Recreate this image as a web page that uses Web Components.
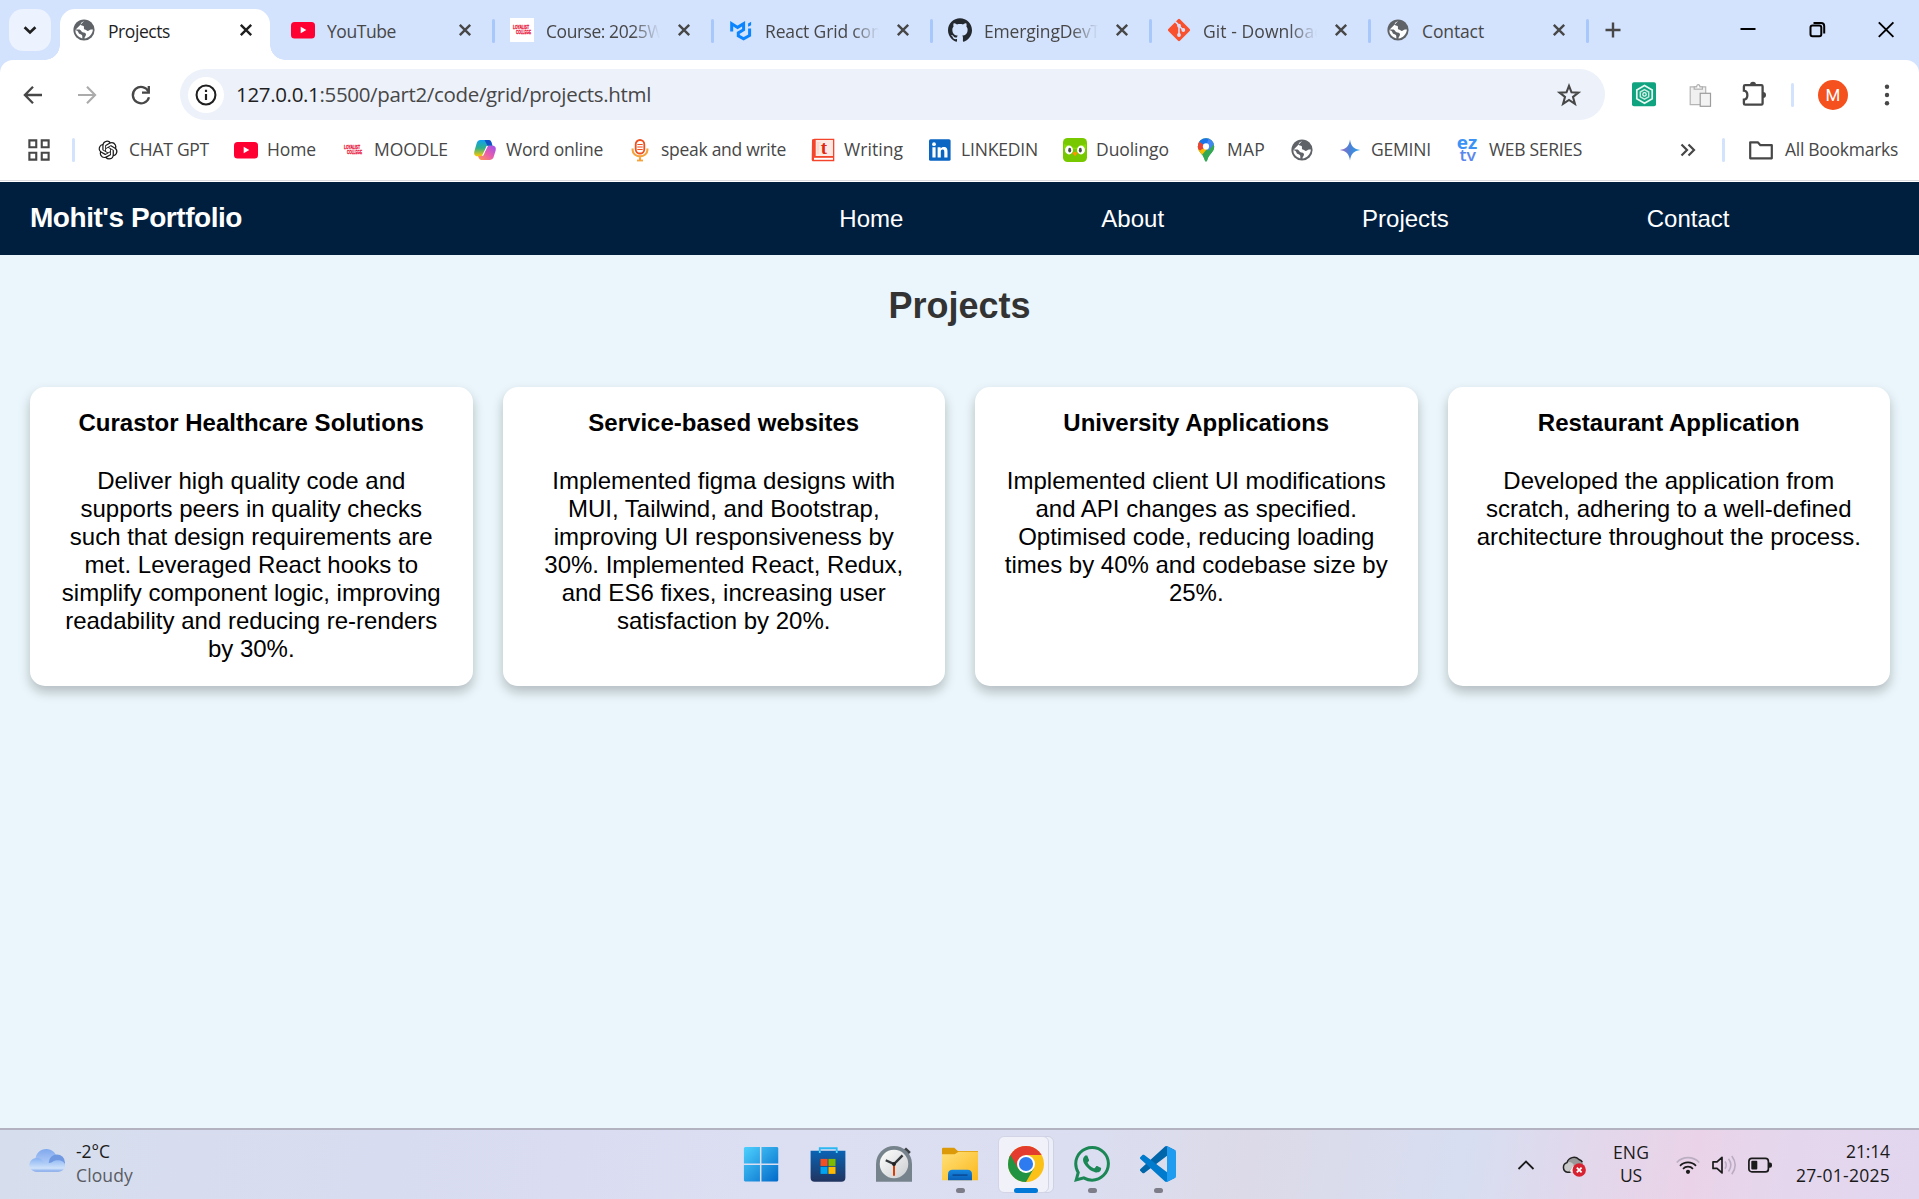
<!DOCTYPE html>
<html lang="en">
<head>
<meta charset="utf-8">
<title>Projects</title>
<style>
html,body{margin:0;height:100%;overflow:hidden;background:#eaf6fb}
</style>
</head>
<body>
<desktop-screen></desktop-screen>
<script>
const UI = '"Open Sans","Noto Sans",sans-serif';

class BaseEl extends HTMLElement {
  mount(css, html) {
    if (this.shadowRoot) return;
    this.attachShadow({mode:'open'}).innerHTML = `<style>*{box-sizing:border-box}${css}</style>${html}`;
  }
}

/* A single line of text spread over a given width by letter spacing. */
class FitText extends BaseEl {
  connectedCallback() {
    const w = +this.getAttribute('w');
    this.mount(`:host{display:block;white-space:nowrap;width:${w}px;flex:none}span{display:inline-block}`, `<span><slot></slot></span>`);
    const span = this.shadowRoot.querySelector('span');
    const natural = span.getBoundingClientRect().width;
    span.style.letterSpacing = ((w - natural) / this.textContent.length).toFixed(3) + 'px';
  }
}
customElements.define('fit-text', FitText);

const ICONS = {
  globe: `<circle cx="12" cy="12" r="10.6" fill="#5f6368"/><path d="M12.200 3.100c-1.900 1-3.200 1.600-3.500 2.900-.2 1 .9 1.600 2 1.700 1.400 .2 1.400 1.300 1.200 2.400-.1 1 .5 1.600 1.500 1.700 1.300 .1 1.300 1.300 2.300 1.300 1.200 0 2-1.600 3.300-1.600h1.900c-.3 4.600-4 8.600-8.400 9.100-.1-1.800 1.500-2.300 1.500-4 0-1.900-1.600-2.100-3-2.200-2-.2-1.900-2.800-4-2.800H3.200A9 9 0 0 0 10.300 20.500v-2.300c0-1.300-1.400-1.800-2.500-2.100-1.500-.4-1.200-2.500-2.600-3.300L3.200 12" fill="white"/>`,
  youtube: `<rect x="0" y="4" width="24" height="16.500" rx="3.500" fill="#ff0033"/><path d="M9.700 8.800v6.400l5.600-3.200z" fill="#fff"/>`,
  loyalistbox: `<rect width="24" height="24" fill="#fff"/><g font-family="Liberation Sans" font-weight="700" fill="#e8203f" stroke="#e8203f" stroke-width=".35"><text x="3" y="11.300" font-size="4.800" textLength="16" lengthAdjust="spacingAndGlyphs">LOYALIST</text><text x="6" y="15.700" font-size="4.800" textLength="15" lengthAdjust="spacingAndGlyphs">COLLEGE</text></g>`,
  loyalist: `<g font-family="Liberation Sans" font-weight="700" fill="#e8203f" stroke="#e8203f" stroke-width=".35"><text x="3" y="11.300" font-size="4.800" textLength="16" lengthAdjust="spacingAndGlyphs">LOYALIST</text><text x="6" y="15.700" font-size="4.800" textLength="15" lengthAdjust="spacingAndGlyphs">COLLEGE</text></g>`,
  mui: `<path d="M2.700 13.500V5.700l5.900 3.700 6-3.700v6l-5.300 3.200v3l5.300 3 6-3.400v-7" fill="none" stroke="#0a84ff" stroke-width="3"/><path d="M19.100 5.500l3-1.700v3.400l-3 1.600z" fill="#0a84ff"/>`,
  github: `<path fill="#24292f" d="M12 .297c-6.630 0-12 5.373-12 12 0 5.303 3.438 9.800 8.205 11.385.6.113.82-.258.82-.577 0-.285-.01-1.040-.015-2.040-3.338.724-4.042-1.610-4.042-1.610C4.422 18.070 3.633 17.700 3.633 17.700c-1.087-.744.084-.729.084-.729 1.205.084 1.838 1.236 1.838 1.236 1.070 1.835 2.809 1.305 3.495.998.108-.776.417-1.305.76-1.605-2.665-.3-5.466-1.332-5.466-5.930 0-1.310.465-2.380 1.235-3.220-.135-.303-.54-1.523.105-3.176 0 0 1.005-.322 3.300 1.230.96-.267 1.980-.399 3-.405 1.020.006 2.040.138 3 .405 2.280-1.552 3.285-1.230 3.285-1.230.645 1.653.24 2.873.12 3.176.765.84 1.230 1.910 1.230 3.220 0 4.610-2.805 5.625-5.475 5.920.42.36.81 1.096.81 2.220 0 1.606-.015 2.896-.015 3.286 0 .315.21.69.825.57C20.565 22.092 24 17.592 24 12.297c0-6.627-5.373-12-12-12"/>`,
  git: `<rect x="3.800" y="3.800" width="16.400" height="16.400" rx="1.300" transform="rotate(45 12 12)" fill="#f9502d"/><path d="M8.200 3.700l3.800 3.600v9.500M12.200 8l4 4" fill="none" stroke="#d3e2fd" stroke-width="1.600"/><circle cx="12" cy="7.700" r="1.900" fill="#d3e2fd"/><circle cx="12" cy="17" r="1.900" fill="#d3e2fd"/><circle cx="16.300" cy="12" r="1.900" fill="#d3e2fd"/>`,
  close: `<path d="M6.800 6.800l10.400 10.400M17.200 6.800L6.800 17.200" stroke="currentColor" stroke-width="2.400" fill="none"/>`,
  plus: `<path d="M12 4.500v15M4.500 12h15" stroke="#474747" stroke-width="2.400"/>`,
  chevdown: `<path d="M6.600 9.300l5.400 5.200 5.400-5.200" fill="none" stroke="#1f1f1f" stroke-width="2.700"/>`,
  back: `<path d="M21 12H4.500M12 3.800L3.900 12l8.100 8.200" fill="none" stroke="#474747" stroke-width="2.300"/>`,
  fwd: `<path d="M3 12h16.500M12 3.800l8.100 8.200-8.100 8.200" fill="none" stroke="#ababab" stroke-width="2.100"/>`,
  reload: `<path d="M19.500 8.600A8.200 8.200 0 1 0 20 14.200" fill="none" stroke="#474747" stroke-width="2.300"/><path d="M19.800 3v6.600H13" fill="none" stroke="#474747" stroke-width="2.300"/>`,
  info: `<circle cx="12" cy="12" r="8.700" fill="none" stroke="#1f1f1f" stroke-width="1.900"/><path d="M12 11v5.600M12 7.200v2" stroke="#1f1f1f" stroke-width="2"/>`,
  star: `<path d="M12 2.800l2.500 6.500 6.900.3-5.400 4.400 1.900 6.800L12 16.900l-5.900 3.900L8 14 2.600 9.600l6.900-.3z" fill="none" stroke="#474747" stroke-width="2.100"/>`,
  gptext: `<g transform="translate(0 -.7)"><rect width="24" height="24" rx="2" fill="#10a37f"/><path d="M12.500 3.300l7.700 4.400v8.800l-7.700 4.400-7.700-4.400V7.700z" fill="none" stroke="#e9f7f2" stroke-width="1.700"/><path d="M12.500 7.300l4.200 2.400v4.800l-4.200 2.400-4.200-2.400V9.700z" fill="none" stroke="#c6e9dd" stroke-width="1.500"/><circle cx="12.500" cy="12.100" r="1.700" fill="none" stroke="#e9f7f2" stroke-width="1.300"/></g>`,
  clip: `<g transform="translate(1.200 .3)"><path d="M2 3.500h15.500v17.800H2z" fill="#f0f0f0" stroke="#b5b5b5" stroke-width="1.200"/><path d="M6 5.800V3.500h2.500C8.500.5 11.500.5 11.700 3.500h2.500v2.300z" fill="#fff" stroke="#b0b0b0" stroke-width="1.200"/><rect x="12" y="10" width="10.300" height="13" fill="#f3f3f3" stroke="#9d9d9d" stroke-width="1.200"/></g>`,
  puzzle: `<path d="M3.200 2.200h16.200q1.200 0 1.200 1.200v17q0 1.300-1.300 1.300H3.200q-1.300 0-1.300-1.300v-3.800c4.600-.6 4.600-8.300 0-8.900V3.500q0-1.300 1.300-1.300z" fill="none" stroke="#474747" stroke-width="2.300"/><path d="M8 1.700a3 3 0 0 1 6 0zM21 9a3 3 0 0 1 0 6z" fill="#474747"/>`,
  dots: `<g fill="#474747"><circle cx="12" cy="3.700" r="2.200"/><circle cx="12" cy="12" r="2.200"/><circle cx="12" cy="20.200" r="2.200"/></g>`,
  apps: `<g fill="none" stroke="#474747" stroke-width="2.300"><path d="M1.500 1.500h7.500v7.500H1.500zM15 1.500h7.500v7.500H15zM1.500 15h7.500v7.500H1.500zM15 15h7.500v7.500H15z"/></g>`,
  openai: `<path transform="translate(2.600 2.600) scale(.79)" fill="#1c1c1c" d="M22.2819 9.8211a5.9847 5.9847 0 0 0-.5157-4.9108 6.0462 6.0462 0 0 0-6.5098-2.9A6.0651 6.0651 0 0 0 4.9807 4.1818a5.9847 5.9847 0 0 0-3.9977 2.9 6.0462 6.0462 0 0 0 .7427 7.0966 5.98 5.98 0 0 0 .511 4.9107 6.051 6.051 0 0 0 6.5146 2.9001A5.9847 5.9847 0 0 0 13.2599 24a6.0557 6.0557 0 0 0 5.7718-4.2058 5.9894 5.9894 0 0 0 3.9977-2.9001 6.0557 6.0557 0 0 0-.7475-7.0729zm-9.022 12.6081a4.4755 4.4755 0 0 1-2.8764-1.0408l.1419-.0804 4.7783-2.7582a.7948.7948 0 0 0 .3927-.6813v-6.7369l2.02 1.1686a.071.071 0 0 1 .038.052v5.5826a4.504 4.504 0 0 1-4.4945 4.4944zm-9.6607-4.1254a4.4708 4.4708 0 0 1-.5346-3.0137l.142.0852 4.783 2.7582a.7712.7712 0 0 0 .7806 0l5.8428-3.3685v2.3324a.0804.0804 0 0 1-.0332.0615L9.74 19.9502a4.4992 4.4992 0 0 1-6.1408-1.6464zM2.3408 7.8956a4.485 4.485 0 0 1 2.3655-1.9728V11.6a.7664.7664 0 0 0 .3879.6765l5.8144 3.3543-2.0201 1.1685a.0757.0757 0 0 1-.071 0l-4.8303-2.7865A4.504 4.504 0 0 1 2.3408 7.872zm16.5963 3.8558L13.1038 8.364 15.1192 7.2a.0757.0757 0 0 1 .071 0l4.8303 2.7913a4.4944 4.4944 0 0 1-.6765 8.1042v-5.6772a.79.79 0 0 0-.407-.667zm2.0107-3.0231l-.142-.0852-4.7735-2.7818a.7759.7759 0 0 0-.7854 0L9.409 9.2297V6.8974a.0662.0662 0 0 1 .0284-.0615l4.8303-2.7866a4.4992 4.4992 0 0 1 6.6802 4.66zM8.3065 12.863l-2.02-1.1638a.0804.0804 0 0 1-.038-.0567V6.0742a4.4992 4.4992 0 0 1 7.3757-3.4537l-.142.0805L8.704 5.459a.7948.7948 0 0 0-.3927.6813zm1.0976-2.3654l2.602-1.4998 2.6069 1.4998v2.9994l-2.5974 1.4997-2.6067-1.4997Z"/>`,
  copilot: `<defs><linearGradient id="a" x1="0" y1="0" x2="0" y2="1"><stop offset="0" stop-color="#0fa0f0"/><stop offset=".5" stop-color="#2fb08a"/><stop offset="1" stop-color="#ffc800"/></linearGradient><linearGradient id="b" x1="1" y1="0" x2="0" y2="1"><stop offset="0" stop-color="#9a50f0"/><stop offset=".5" stop-color="#e85cae"/><stop offset="1" stop-color="#ff9a4a"/></linearGradient></defs><path d="M7.500 2h8c1.800 0 2.600 1.200 3.200 3.200l.8 2.600h-4c-1.800 0-2.300 1-2.800 2.600l-2 5.800c-.6 1.700-1.600 2-3 2H4.300C1.500 18.200.7 15.800 1.400 13.200L3.600 5.600C4.300 3.200 5.300 2 7.500 2z" fill="url(#a)"/><path d="M11.500 2h4c1.800 0 2.600 1.200 3.200 3.200l.8 2.600h-5z" fill="#1450c8"/><path d="M16.500 22h-8c-1.800 0-2.600-1.200-3.200-3.200l-.3-.9h3.500c1.800 0 2.300-1 2.800-2.600l2-5.800c.6-1.600 1.600-1.700 3-1.700h3.400c2.800 0 3.600 2.400 2.900 5l-2.200 7C19.700 21 18.700 22 16.500 22z" fill="url(#b)"/><path d="M12.700 10.200c.5-1.600 1-2.400 2.400-2.400l-3.800 7.500c-.5 1.600-1.100 2.600-2.500 2.600z" fill="#fff"/>`,
  mic: `<rect x="7.700" y="2" width="8.600" height="13.500" rx="4.300" fill="#fff" stroke="#ee4f1f" stroke-width="1.800"/><path d="M9.300 6.500h5.400M9.300 9h5.400M9.300 11.500h5.400" stroke="#ee4f1f" stroke-width="1.100"/><path d="M4.600 10.500v1.500a7.300 6.300 0 0 0 14.800 0v-1.500M12 18.400v4" fill="none" stroke="#f5a33c" stroke-width="2.100"/><path d="M9 22.500h6" stroke="#f5a33c" stroke-width="1.800"/>`,
  writing: `<path d="M1 1.500L3.500.7H23.300V23.200H1.500L.7 22z" fill="#f2452b"/><path d="M4.700 2h17.300v16H4.700z" fill="#fde9e4"/><path d="M3 19.800h19v2H3z" fill="#fff"/><path d="M6.500 4h1v12h-1zM8.500 4h1v1.500h-1z" fill="#fbcdc2"/><text x="12.800" y="15.800" text-anchor="middle" font-family="Liberation Serif" font-weight="700" font-size="19" fill="#e02814">t</text>`,
  linkedin: `<rect x="1" y="1.200" width="21.600" height="21.600" rx="1.600" fill="#0a66c2"/><g fill="#fff"><circle cx="6" cy="6.200" r="1.900"/><path d="M4.400 9.200h3.200v10.300H4.400zM9.600 9.200h3v1.400c.6-1 1.700-1.700 3.200-1.700 3 0 3.700 2 3.700 4.800v5.800h-3.200v-5.200c0-1.400-.1-2.700-1.700-2.700s-1.800 1.200-1.800 2.600v5.300H9.600z"/></g>`,
  duo: `<rect width="24" height="24" rx="4.500" fill="#78c800"/><path d="M1 6l4.500 1.500L12 10l6.500-2.500L23 6v5H1z" fill="#8be000" opacity=".8"/><ellipse cx="6" cy="12" rx="4" ry="4.400" fill="#fff"/><ellipse cx="18" cy="12" rx="4" ry="4.400" fill="#fff"/><ellipse cx="6.700" cy="12.200" rx="1.500" ry="2.400" fill="#4b4b4b"/><ellipse cx="17.300" cy="12.200" rx="1.500" ry="2.400" fill="#4b4b4b"/><path d="M9.300 15q2.700-2.200 5.400 0l-2.700 3.300z" fill="#ff9600"/>`,
  map: `<defs><clipPath id="p"><path d="M12 .2a8.200 8.200 0 0 1 8.200 8.200c0 2.700-1.200 4.700-3.200 7.100-2.100 2.600-3.300 4.500-3.900 6.900-.3 1.300-1.900 1.300-2.200 0-.6-2.400-1.800-4.300-3.900-6.900-2-2.400-3.200-4.400-3.200-7.100A8.200 8.200 0 0 1 12 .2z"/></clipPath></defs><g clip-path="url(#p)"><path d="M0 0h24v24H0z" fill="#34a853"/><path d="M3 20V8l6 3 6-6 4-1-12 14z" fill="#fbbc04"/><path d="M20 6l-13 15 6 4 12-15z" fill="#34a853"/><path d="M12 8.400L4.500 2.600 2 9l4 3.500z" fill="#ea4335"/><path d="M12 8.400L4.800 3.200 10-1h5l-.5 6z" fill="#1a73e8"/><path d="M12 8.400L15-1l5 4 1 2-7 8z" fill="#4285f4"/></g><circle cx="12" cy="8.400" r="3.100" fill="#fff"/>`,
  gemini: `<defs><linearGradient id="g" x1="0" x2="1"><stop offset="0" stop-color="#9b6fc0"/><stop offset=".5" stop-color="#4b82d8"/><stop offset="1" stop-color="#28a0e8"/></linearGradient></defs><path d="M12 1.500C12.800 8 16 11.200 22.200 12 16 12.800 12.800 16 12 22.500 11.200 16 8 12.800 1.800 12 8 11.200 11.200 8 12 1.500z" fill="url(#g)"/>`,
  eztv: `<text font-family="Open Sans" font-weight="700"><tspan x="0.800" y="10.800" font-size="17.500" textLength="20.500" lengthAdjust="spacingAndGlyphs" fill="#3b93f5">ez</tspan><tspan x="3.500" y="23.400" font-size="17" font-weight="600" textLength="16.500" lengthAdjust="spacingAndGlyphs" fill="#5c86ec">tv</tspan></text>`,
  more: `<path d="M5.500 6.500l5.500 5.500-5.500 5.500M12.500 6.500l5.500 5.500-5.500 5.500" fill="none" stroke="#474747" stroke-width="2.200"/>`,
  folder: `<path d="M1.200 4.300h7.600l2.600 2.900h11.400v13.100H1.200z" fill="none" stroke="#474747" stroke-width="2.200" stroke-linejoin="round"/>`,
  min: `<path d="M4.500 11h15" stroke="#000" stroke-width="2"/>`,
  restore: `<rect x="5.500" y="7.500" width="10.800" height="10.800" rx="2" fill="none" stroke="#000" stroke-width="2"/><path d="M8.500 4.900h7.500q3.200 0 3.200 3.200v7.400" fill="none" stroke="#000" stroke-width="2"/>`,
  winclose: `<path d="M4.800 4.300l14.600 14.600M19.400 4.300L4.800 18.900" stroke="#000" stroke-width="1.900"/>`,
  chevup: `<path d="M4.500 16l7.500-7.500 7.500 7.500" fill="none" stroke="#1b1b1b" stroke-width="1.800"/>`,
  onedrive: `<path d="M5.500 19.300a5 5 0 0 1-.5-9.700C6.500 4.500 13 2.500 17 6.500c2.500 1 4 2.500 4.300 5.500l-2 7.300z" fill="#9a9a9a"/><path d="M5 9.600c3-1.500 5 0 7 2.400l-6 7.300a5 5 0 0 1-1-9.700z" fill="#c9c9c9"/><path d="M11 13l5-2 3 1-3 7H7z" fill="#efefef"/><path d="M8.500 19.300H5.500a5 5 0 0 1-.5-9.700C6.500 4.500 13 2.500 17 6.500c1.500.6 2.700 1.300 3.300 2.600" fill="none" stroke="#222" stroke-width="1.500"/><circle cx="17.200" cy="17" r="6.700" fill="#d92231"/><path d="M14.800 14.600l4.800 4.800M19.600 14.600l-4.800 4.800" stroke="#fff" stroke-width="1.800"/>`,
  wifi: `<g fill="none" stroke="#1b1b1b" stroke-width="1.700"><path d="M.8 9.500a15.500 15.500 0 0 1 22.400 0" stroke="#bbaec2"/><path d="M4 12.800a11 11 0 0 1 16 0M7 15.800a7 7 0 0 1 10 0"/></g><circle cx="12" cy="18.800" r="2.100" fill="#1b1b1b"/>`,
  speaker: `<path d="M1 8.800h4l5-4.500v15.600L5 15.400H1z" fill="none" stroke="#1b1b1b" stroke-width="1.700" stroke-linejoin="round"/><path d="M13 8.500c1.600 2.300 1.600 4.900 0 7.200M16.500 5.800c3 4 3 8.600 0 12.600M19.800 3c4.500 6 4.500 12.200 0 18.200" fill="none" stroke="#b9acc2" stroke-width="1.600"/>`,
  battery: `<rect x=".9" y="5.400" width="19.500" height="13.500" rx="3" fill="none" stroke="#1b1b1b" stroke-width="1.700"/><rect x="3.300" y="7.800" width="6" height="8.700" rx="1" fill="#1b1b1b"/><path d="M21 9.500h1q2 0 2 2v1.300q0 2-2 2h-1z" fill="#1b1b1b"/>`,
  cloud: `<defs><linearGradient id="c" x1="0" y1="0" x2="0" y2="1"><stop offset="0" stop-color="#7fa8ee"/><stop offset="1" stop-color="#c9dcfa"/></linearGradient><linearGradient id="d" x1="0" y1="0" x2="0" y2="1"><stop offset="0" stop-color="#88b2f2"/><stop offset=".75" stop-color="#cfe2fb"/><stop offset="1" stop-color="#7ba3ea"/></linearGradient></defs><circle cx="11.500" cy="11.800" r="7.200" fill="url(#c)"/><circle cx="18.600" cy="13.700" r="5.400" fill="#7099e2"/><path d="M5 19.800a5 4.600 0 1 1 4.600-6.800c1.500 1.500 4.300 1 6 .3 1.500-1.900 8.400-1.800 8.400 2.200 0 2.700-2 4.300-4.500 4.300z" fill="url(#d)"/>`,
  windows: `<defs><linearGradient id="w2" gradientUnits="userSpaceOnUse" x1="0" y1="0" x2="24" y2="24"><stop offset="0" stop-color="#50d4ff"/><stop offset="1" stop-color="#0067c8"/></linearGradient></defs><path d="M1.300.6h10v11.100H.6V1.300zM12.300.6h10.600l.6.7v10.400H12.300zM.6 12.600h10.700v11h-10l-.7-.6zM12.300 12.600h11.200v10.300l-.6.7H12.300z" fill="url(#w2)"/>`,
  store: `<defs><linearGradient id="s" x1="0" y1="0" x2="0" y2="1"><stop offset="0" stop-color="#0a63b4"/><stop offset="1" stop-color="#21345f"/></linearGradient></defs><path d="M6.500 5V1.500h11.300V5" fill="none" stroke="#2bb8f2" stroke-width="1.200"/><path d="M.4 3.200h23.200v18q0 2.700-2.700 2.700H3.100q-2.700 0-2.700-2.700z" fill="url(#s)"/><path d="M6.500 3v1.700M17.800 3v1.700" stroke="#4fd8ff" stroke-width="1.200"/><path d="M7 8.600h4.700v4.700H7z" fill="#f25022"/><path d="M12.300 8.600H17v4.700h-4.700z" fill="#7fba00"/><path d="M7 13.900h4.700v4.700H7z" fill="#00a4ef"/><path d="M12.300 13.900H17v4.700h-4.700z" fill="#ffb900"/>`,
  clock: `<defs><linearGradient id="k" x1="0" y1="0" x2="1" y2="1"><stop offset="0" stop-color="#fff"/><stop offset="1" stop-color="#c9ccce"/></linearGradient></defs><path d="M20 1l3.200 3-1.700 1.800L18.300 2.700z" fill="#3c4144"/><path d="M12 0a12 12 0 0 1 12 12v11.800H0V12A12 12 0 0 1 12 0z" fill="#76838c"/><circle cx="12" cy="12" r="9.500" fill="url(#k)"/><path d="M12 12v7.800" stroke="#d83b01" stroke-width="1.300"/><path d="M6.500 9.500l5.500 2.500 5.700-5.700" fill="none" stroke="#33383c" stroke-width="1.600"/><circle cx="12" cy="12" r="1.300" fill="#222"/>`,
  explorer: `<defs><linearGradient id="e" x1="0" y1="0" x2="1" y2="1"><stop offset="0" stop-color="#ffe07a"/><stop offset="1" stop-color="#fbb81c"/></linearGradient><linearGradient id="e2" x1="0" y1="0" x2="0" y2="1"><stop offset="0" stop-color="#1586e0"/><stop offset="1" stop-color="#0a60b8"/></linearGradient></defs><path d="M0 2q0-.8.800-.8h7.400L10.500 3.400H24V8H0z" fill="#dc9a08"/><path d="M0 5.500h8.500L11 3.900h13v19H0z" fill="url(#e)"/><path d="M4 22.900v-4q0-3 3-3h10q3 0 3 3v4z" fill="url(#e2)"/><path d="M7 19.400h10" stroke="#0a4a94" stroke-width="1"/>`,
  chrome: `<defs><clipPath id="h"><circle cx="12" cy="12" r="12"/></clipPath></defs><g clip-path="url(#h)"><path d="M0 0h24v24H0z" fill="#fbc116"/><path d="M12 6h14V-2H-2v8l8.800 9L12 12z" fill="#e33b2e"/><path d="M1.600 6L6.800 15l5.200 3 5.200-3L12 24-4 24V4z" fill="#229342"/></g><circle cx="12" cy="12" r="6" fill="#fff"/><circle cx="12" cy="12" r="4.700" fill="#2e7bf0"/>`,
  whatsapp: `<path fill="#1b8755" d="M17.472 14.382c-.297-.149-1.758-.867-2.030-.967-.273-.099-.471-.148-.67.15-.197.297-.767.966-.94 1.164-.173.199-.347.223-.644.075-.297-.15-1.255-.463-2.390-1.475-.883-.788-1.480-1.761-1.653-2.059-.173-.297-.018-.458.13-.606.134-.133.298-.347.446-.52.149-.174.198-.298.298-.497.099-.198.05-.371-.025-.52-.075-.149-.669-1.612-.916-2.207-.242-.579-.487-.5-.669-.51-.173-.008-.371-.01-.57-.01-.198 0-.52.074-.792.372-.272.297-1.040 1.016-1.040 2.479 0 1.462 1.065 2.875 1.213 3.074.149.198 2.096 3.200 5.077 4.487.709.306 1.262.489 1.694.625.712.227 1.360.195 1.871.118.571-.085 1.758-.719 2.006-1.413.248-.694.248-1.289.173-1.413-.074-.124-.272-.198-.57-.347m-5.421 7.403h-.004a9.870 9.870 0 01-5.031-1.378l-.361-.214-3.741.982.998-3.648-.235-.374a9.860 9.860 0 01-1.510-5.260c.001-5.450 4.436-9.884 9.888-9.884 2.640 0 5.122 1.030 6.988 2.898a9.825 9.825 0 012.893 6.994c-.003 5.450-4.437 9.884-9.885 9.884m8.413-18.297A11.815 11.815 0 0012.050 0C5.495 0 .16 5.335.157 11.892c0 2.096.547 4.142 1.588 5.945L.057 24l6.305-1.654a11.882 11.882 0 005.683 1.448h.005c6.554 0 11.890-5.335 11.893-11.893a11.821 11.821 0 00-3.480-8.413z"/>`,
  vscode: `<g transform="scale(.24)"><path fill="#0065a9" d="M96.460 10.800L75.860.88c-2.380-1.150-5.230-.66-7.100 1.200L1.300 63.600c-1.820 1.650-1.810 4.510 0 6.160l5.510 5.010c1.480 1.350 3.720 1.450 5.320.24l81.240-61.630C96.100 11.310 100 13.250 100 16.670v-.24c0-2.400-1.370-4.580-3.540-5.630z"/><path fill="#007acc" d="M96.460 89.200l-20.600 9.920c-2.380 1.150-5.230.66-7.100-1.200L1.300 36.400c-1.820-1.650-1.810-4.510 0-6.160l5.510-5.010c1.480-1.350 3.720-1.450 5.320-.24l81.240 61.630c2.730 2.070 6.630.13 6.630-3.290v.24c0 2.400-1.370 4.580-3.540 5.630z"/><path fill="#1f9cf0" d="M75.860 99.130a6.230 6.230 0 01-7.100-1.200c2.300 2.300 6.240.67 6.240-2.590V4.660c0-3.260-3.940-4.890-6.240-2.590a6.230 6.230 0 017.100-1.200l20.600 9.900A6.250 6.250 0 01100 16.400v67.200c0 2.400-1.370 4.600-3.540 5.630z"/></g>`
};

class UiIcon extends BaseEl {
  connectedCallback() {
    const s = this.getAttribute('size') || 24;
    this.mount(`:host{display:block;flex:none;width:${s}px;height:${s}px}svg{display:block;overflow:visible}`,
      `<svg width="${s}" height="${s}" viewBox="0 0 24 24">${ICONS[this.getAttribute('name')]}</svg>`);
  }
}
customElements.define('ui-icon', UiIcon);

class BrowserTab extends BaseEl {
  connectedCallback() {
    this.mount(`
:host{display:flex;width:219px;height:51px;padding-left:3px;color:#474747;flex:none}
.body{display:flex;align-items:flex-start;flex:1;min-width:0;height:51px;padding:9px 12px 0;gap:12px;position:relative}
.ttl{flex:1;min-width:0;overflow:hidden;font:17.500px/26px ${UI};height:26px}
:host([clip]) .ttl{-webkit-mask-image:linear-gradient(90deg,#000 76%,transparent 100%);mask-image:linear-gradient(90deg,#000 76%,transparent 100%)}
.sep{width:3px;height:24px;border-radius:2px;background:#a8c7fa;margin:10px 0 0 3px;flex:none}
:host([last]){width:218px}
:host([active]){color:#1f1f1f}
:host([active]) .body{background:#fff;border-radius:15px 15px 0 0}
:host([active]) .sep{visibility:hidden}
:host([active]) .body::before,:host([active]) .body::after{content:"";position:absolute;bottom:0;width:15px;height:15px}
:host([active]) .body::before{left:-15px;background:radial-gradient(circle at 0 0,transparent 14.500px,#fff 15px)}
:host([active]) .body::after{right:-15px;background:radial-gradient(circle at 100% 0,transparent 14.500px,#fff 15px)}`,
`<div class="body"><ui-icon name="${this.getAttribute('icon')}"></ui-icon><div class="ttl"><fit-text w="${this.getAttribute('w')}">${this.getAttribute('label')}</fit-text></div><ui-icon name="close"></ui-icon></div><div class="sep"></div>`);
  }
}
customElements.define('browser-tab', BrowserTab);

class TabStrip extends BaseEl {
  connectedCallback() {
    this.mount(`
:host{display:flex;height:60px;padding:9px 21px 0 9px;background:#d3e2fd}
.menu{width:42px;height:42px;border-radius:14px;background:#ecf2fe;display:flex;align-items:center;justify-content:center;margin-right:6px;flex:none}
.new{margin:9px 0 0 12px}
.win{display:flex;gap:45px;margin:9px 0 0 auto;width:162px;flex:none}`,
`<div class="menu"><ui-icon name="chevdown"></ui-icon></div>
<browser-tab active icon="globe" label="Projects" w="62"></browser-tab>
<browser-tab icon="youtube" label="YouTube" w="69"></browser-tab>
<browser-tab clip icon="loyalistbox" label="Course: 2025W" w="117"></browser-tab>
<browser-tab clip icon="mui" label="React Grid com" w="122"></browser-tab>
<browser-tab clip icon="github" label="EmergingDevT" w="116"></browser-tab>
<browser-tab clip icon="git" label="Git - Download" w="122"></browser-tab>
<browser-tab last icon="globe" label="Contact" w="62"></browser-tab>
<ui-icon class="new" name="plus"></ui-icon>
<div class="win"><ui-icon name="min"></ui-icon><ui-icon name="restore"></ui-icon><ui-icon name="winclose"></ui-icon></div>`);
  }
}
customElements.define('tab-strip', TabStrip);

class AddressRow extends BaseEl {
  connectedCallback() {
    this.mount(`
:host{display:flex;align-items:center;height:69px;padding:0 20px 0 21px}
.nav{display:flex;gap:30px;width:159px;flex:none}
.omni{display:flex;align-items:center;width:1425px;height:51px;border-radius:26px;background:#ecf1fa;padding:0 24px 0 8px;color:#474747;font:20.500px/30px ${UI};flex:none}
.omni fit-text{margin-bottom:2px}
.i{width:36px;height:36px;border-radius:50%;background:#fff;display:flex;align-items:center;justify-content:center;margin-right:12px}
b{font-weight:400;color:#1f1f1f}
.star{margin-left:auto}
.ext{display:flex;gap:31px;margin-left:27px}
.sep{width:3px;height:24px;border-radius:2px;background:#d3e2fd;margin-left:25px}
.av{width:30px;height:30px;border-radius:50%;background:#f4511e;color:#fff;font:400 17px/30px Roboto,sans-serif;text-align:center;margin:0 auto 0 24px}`,
`<div class="nav"><ui-icon name="back"></ui-icon><ui-icon name="fwd"></ui-icon><ui-icon name="reload"></ui-icon></div>
<div class="omni"><div class="i"><ui-icon name="info" size="26"></ui-icon></div><fit-text w="415"><b>127.0.0.1</b>:5500/part2/code/grid/projects.html</fit-text><ui-icon class="star" name="star"></ui-icon></div>
<div class="ext"><ui-icon name="gptext"></ui-icon><ui-icon name="clip"></ui-icon><ui-icon name="puzzle"></ui-icon></div><div class="sep"></div><div class="av">M</div><ui-icon name="dots"></ui-icon>`);
  }
}
customElements.define('address-row', AddressRow);

class BookmarkItem extends BaseEl {
  connectedCallback() {
    const l = this.getAttribute('label');
    this.mount(`:host{display:flex;align-items:center;gap:9px;flex:none;font:17.500px/24px ${UI};color:#474747}fit-text{margin:-2px 1px 0 0}`,
      `<ui-icon name="${this.getAttribute('icon')}"></ui-icon>${l ? `<fit-text w="${this.getAttribute('w')}">${l}</fit-text>` : ''}`);
  }
}
customElements.define('bookmark-item', BookmarkItem);

class BookmarkRow extends BaseEl {
  connectedCallback() {
    this.mount(`
:host{display:flex;align-items:center;height:51px;padding:0 20px 9px 28px}
.sep{width:3px;height:24px;border-radius:2px;background:#d3e2fd}
.list{display:flex;gap:24px;margin-left:21px}
.end{display:flex;align-items:center;margin-left:auto}`,
`<ui-icon name="apps" size="22"></ui-icon><div class="sep" style="margin-left:22px"></div>
<div class="list">
<bookmark-item icon="openai" label="CHAT GPT" w="80"></bookmark-item>
<bookmark-item icon="youtube" label="Home" w="49"></bookmark-item>
<bookmark-item icon="loyalist" label="MOODLE" w="74"></bookmark-item>
<bookmark-item icon="copilot" label="Word online" w="97"></bookmark-item>
<bookmark-item icon="mic" label="speak and write" w="125"></bookmark-item>
<bookmark-item icon="writing" label="Writing" w="59"></bookmark-item>
<bookmark-item icon="linkedin" label="LINKEDIN" w="77"></bookmark-item>
<bookmark-item icon="duo" label="Duolingo" w="73"></bookmark-item>
<bookmark-item icon="map" label="MAP" w="38"></bookmark-item>
<bookmark-item icon="globe"></bookmark-item>
<bookmark-item icon="gemini" label="GEMINI" w="60"></bookmark-item>
<bookmark-item icon="eztv" label="WEB SERIES" w="93"></bookmark-item>
</div>
<div class="end"><ui-icon name="more"></ui-icon><div class="sep" style="margin:0 24px 0 22px"></div><bookmark-item icon="folder" label="All Bookmarks" w="113" style="gap:12px"></bookmark-item></div>`);
  }
}
customElements.define('bookmark-row', BookmarkRow);

class BrowserChrome extends BaseEl {
  connectedCallback() {
    this.mount(`:host{display:block;height:182px;background:#d3e2fd;flex:none}.panel{background:#fff;height:122px;border-radius:13px 13px 0 0;display:flex;flex-direction:column}address-row{flex:none}bookmark-row{flex:none}.line{height:1px;background:#dadce0;flex:none}`,
    `<tab-strip></tab-strip><div class="panel"><address-row></address-row><bookmark-row></bookmark-row><div class="line"></div></div>`);
  }
}
customElements.define('browser-chrome', BrowserChrome);

class SiteHeader extends BaseEl {
  connectedCallback() {
    this.mount(`
:host{display:flex;align-items:center;height:73px;background:#001f3f;color:#fff;padding:0 189px 0 30px;flex:none}
h1{margin:0 auto 2px 0;font-size:28px;line-height:32px}
nav{display:flex;gap:198px;font-size:24px;line-height:28px;margin-right:.5px}a{color:#fff}`,
`<h1><fit-text w="212">Mohit's Portfolio</fit-text></h1><nav><a>Home</a><a>About</a><a>Projects</a><a>Contact</a></nav>`);
  }
}
customElements.define('site-header', SiteHeader);

class ProjectCard extends BaseEl {
  connectedCallback() {
    this.mount(`
:host{display:block;background:#fff;border-radius:15px;padding:21.500px 22.500px;box-shadow:0 6px 12px rgba(0,0,0,.23);text-align:center;color:#000;font-size:24px;line-height:28px;min-width:0}
h3{font-size:24px;margin:0 0 30px}p{margin:0}`, `<h3><slot name="title"></slot></h3><p><slot></slot></p>`);
  }
}
customElements.define('project-card', ProjectCard);

class PortfolioPage extends BaseEl {
  connectedCallback() {
    this.mount(`
:host{display:flex;flex-direction:column;flex:1;background:#eaf6fb;font-family:"Liberation Sans",Arial,sans-serif;min-height:0}
h2{margin:30px 0 0;font-size:36px;line-height:41px;text-align:center;color:#333;flex:none}
.grid{display:grid;grid-template-columns:repeat(4,1fr);gap:30px;padding:61px 29px 0 30px;height:360px;flex:none}`,
`<site-header></site-header><h2>Projects</h2><div class="grid">
<project-card><span slot="title">Curastor Healthcare Solutions</span>Deliver high quality code and supports peers in quality checks such that design requirements are met. Leveraged React hooks to simplify component logic, improving readability and reducing re-renders by 30%.</project-card>
<project-card><span slot="title">Service-based websites</span>Implemented figma designs with MUI, Tailwind, and Bootstrap, improving UI responsiveness by 30%. Implemented React, Redux, and ES6 fixes, increasing user satisfaction by 20%.</project-card>
<project-card><span slot="title">University Applications</span>Implemented client UI modifications and API changes as specified. Optimised code, reducing loading times by 40% and codebase size by 25%.</project-card>
<project-card><span slot="title">Restaurant Application</span>Developed the application from scratch, adhering to a well-defined architecture throughout the process.</project-card>
</div>`);
  }
}
customElements.define('portfolio-page', PortfolioPage);

class TaskButton extends BaseEl {
  connectedCallback() {
    this.mount(`
:host{display:flex;flex-direction:column;align-items:center;width:66px;height:69px;padding-top:16px;position:relative;flex:none}
ui-icon{position:relative}
i{display:block;width:9px;height:5px;border-radius:3px;background:#7d7d89;margin-top:6px;position:relative;visibility:hidden}
:host([open]) i{visibility:visible}
:host([active]) i{width:24px;background:#0078d7}
.b1,.b2{display:none;position:absolute;top:6px;height:57px;border-radius:6px;background:#eceef8;border:1px solid #cfd1e4}
:host([active]) .b1,:host([active]) .b2{display:block}
.b1{left:14px;width:47px}.b2{left:5px;width:51px;background:#f0f1f9;border-color:#d3d5e6}`,
`<div class="b1"></div><div class="b2"></div><ui-icon name="${this.getAttribute('icon')}" size="36"></ui-icon><i></i>`);
  }
}
customElements.define('task-button', TaskButton);

class TaskBar extends BaseEl {
  connectedCallback() {
    this.mount(`
:host{display:grid;grid-template-columns:728px 1fr 728px;height:71px;border-top:2px solid #b2b2c0;background:linear-gradient(100deg,#d6deed 0,#d8dcf0 20%,#dcdef2 40%,#dbdef0 57%,#dcdae8 65%,#d7def1 76%,#e3d7eb 83%,#ead3e9 88%,#e4d7ed 93%,#e2d6ef 100%);font:17.500px/24px ${UI};color:#1a1a1a;flex:none}
.l{display:flex;padding:9px 0 0 29px;gap:11px}
.l ui-icon{margin-top:3px}
.c{display:flex}
.c task-button:first-child{margin-right:1px}
.r{display:flex;align-items:center;justify-content:flex-end;padding:0 29px 0 0}
.lang{text-align:center;margin:0 27px 0 27px}
.lang div{display:flex;justify-content:center;line-height:23px}
.icons{display:flex;gap:12px;margin-right:24px}
.time div{display:flex;justify-content:flex-end}
.time{margin-top:-4px}.lang{margin-top:-2px}`,
`<div class="l"><ui-icon name="cloud" size="36"></ui-icon><div><fit-text w="34">-2°C</fit-text><fit-text w="57" style="color:#5a5c64">Cloudy</fit-text></div></div>
<div class="c"><task-button icon="windows"></task-button><task-button icon="store"></task-button><task-button icon="clock"></task-button><task-button icon="explorer" open></task-button><task-button icon="chrome" open active></task-button><task-button icon="whatsapp" open></task-button><task-button icon="vscode" open></task-button></div>
<div class="r"><ui-icon name="chevup"></ui-icon><ui-icon name="onedrive" style="margin-left:24px"></ui-icon>
<div class="lang"><div><fit-text w="36">ENG</fit-text></div><div><fit-text w="22">US</fit-text></div></div>
<div class="icons"><ui-icon name="wifi"></ui-icon><ui-icon name="speaker"></ui-icon><ui-icon name="battery"></ui-icon></div>
<div class="time"><div><fit-text w="44">21:14</fit-text></div><div><fit-text w="94">27-01-2025</fit-text></div></div></div>`);
  }
}
customElements.define('task-bar', TaskBar);

class DesktopScreen extends BaseEl {
  connectedCallback() {
    this.mount(`:host{display:flex;flex-direction:column;width:1919px;height:1199px;overflow:hidden}`,
      `<browser-chrome></browser-chrome><portfolio-page></portfolio-page><task-bar></task-bar>`);
  }
}
customElements.define('desktop-screen', DesktopScreen);
</script>
</body>
</html>
